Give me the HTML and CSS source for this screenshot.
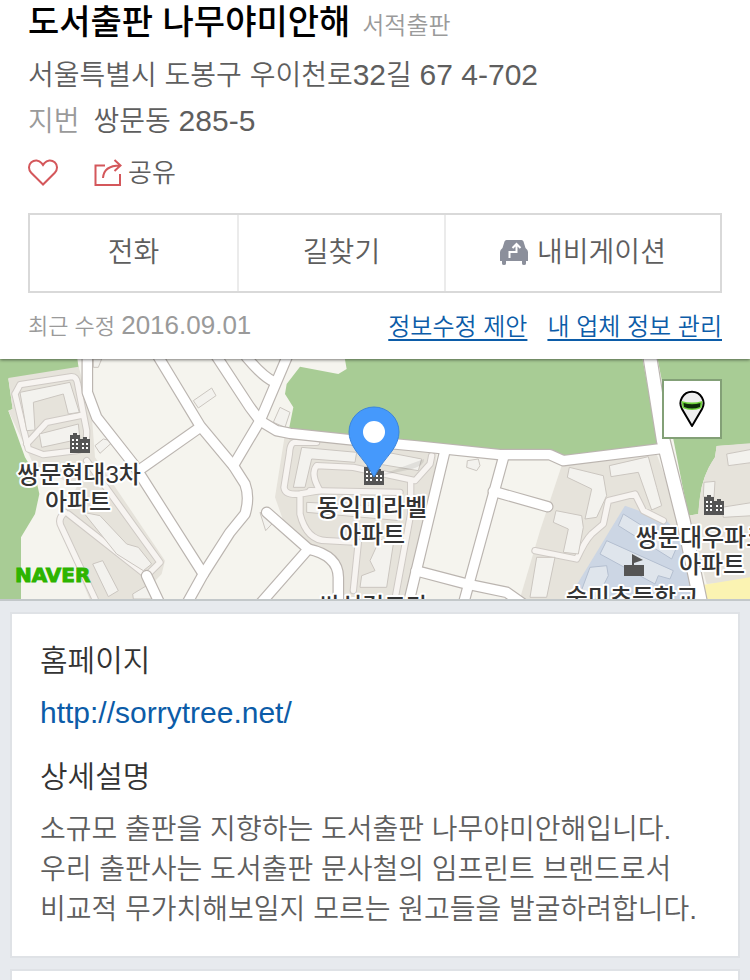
FILE: index.html
```html
<!DOCTYPE html>
<html lang="ko">
<head>
    <meta charset="UTF-8">
    <meta name="viewport" content="width=device-width, initial-scale=1.0">
    <title>도서출판 나무야미안해</title>
    <link rel="stylesheet" href="styles.css">
</head>
<body>
<header class="place">
    <div class="place-title">
        <h1>도서출판 나무야미안해</h1>
        <span class="category">서적출판</span>
    </div>
    <p class="address">서울특별시 도봉구 우이천로<span class="num">32</span>길 <span class="num">67 4-702</span></p>
    <p class="address"><span class="tag">지번</span>쌍문동 <span class="num">285-5</span></p>
    <div class="actions">
        <button class="icon-btn" aria-label="저장">
            <svg width="30" height="28" viewBox="0 0 30 28"><path d="M15 25.500 L3.200 13.800 C.2 10.600.3 6 3.300 3.300 C6.500.6 11 1 13.600 4.200 L15 6 L16.400 4.200 C19 1 23.500.6 26.700 3.300 C29.700 6 29.800 10.600 26.800 13.800 Z"/></svg>
        </button>
        <button class="icon-btn">
            <svg width="28" height="28" viewBox="0 0 28 28"><path d="M11 6.500 H1.500 V26 H26 V15"/><path d="M9 19 C9.500 11.500 15 6.500 26 6.500 M20.500 1 L26.500 6.500 L20.500 12"/></svg>
            공유
        </button>
    </div>
    <div class="menu">
        <button>전화</button>
        <button>길찾기</button>
        <button>
            <svg width="28" height="26" viewBox="0 0 28 26"><path fill="#8b8f9b" d="M6.500 0 H21.500 Q23 0 23.500 1.500 L25.500 8 Q28 10 28 12 V21 H26 V23.500 Q26 25 24 25 Q22 25 22 23.500 V21 H6 V23.500 Q6 25 4 25 Q2 25 2 23.500 V21 H0 V12 Q0 10 2.500 8 L4.500 1.500 Q5 0 6.500 0 Z"/><path fill="none" stroke="#fff" stroke-width="2" d="M9.500 18 V12 H16.500 V5 M12.500 8 L16.500 4 L20.500 8"/></svg>
            내비게이션
        </button>
    </div>
    <div class="meta">
        <span class="updated">최근 수정 <span class="num">2016.09.01</span></span>
        <nav>
            <a href="#">정보수정 제안</a>
            <a href="#">내 업체 정보 관리</a>
        </nav>
    </div>
</header>

<div class="map">
    <svg class="map-canvas" viewBox="0 0 750 240" preserveAspectRatio="xMidYMid slice">
        <defs>
            <g id="apt"><path fill="#555" d="M0 2 H3 V0 H7 V2 H10 V6 H13 V4 H17 V6 H20 V20 H0 Z"/><path fill="#fff" d="M2 6h2v2h-2zM6 6h2v2h-2zM2 10h2v2h-2zM6 10h2v2h-2zM2 14h2v2h-2zM6 14h2v2h-2zM12 10h2v2h-2zM16 10h2v2h-2zM12 14h2v2h-2zM16 14h2v2h-2z"/></g>
            <g id="roads">
                <path d="M262 0 V115 L290 190 L400 330 L610 660"/>
                <path d="M470 0 L600 215 L700 335 L735 390 Q750 430 735 480 L690 535 L610 660 L560 750"/>
                <path d="M415 350 L600 220"/>
                <path d="M645 0 L750 160 L780 200 L830 230 L870 238 L1040 256 L1250 276 L1500 302 H1650 L1690 320 L1990 283"/>
                <path d="M865 0 L780 200 L700 335"/>
                <path d="M740 10 Q790 70 825 85"/>
                <path d="M800 475 L925 585 L780 750"/>
                <path d="M925 585 Q1015 605 1015 670 V750"/>
                <path d="M1335 290 L1225 750"/>
                <path d="M1248 650 L1400 690 L1520 715 L1570 750"/>
                <path d="M1512 305 L1390 750"/>
                <path d="M1480 412 L1643 458"/>
                <path d="M440 665 L480 750"/>
            </g>
            <g id="lanes">
                <path d="M45 120 L60 92 L215 68 Q230 68 233 90 L260 230 Q262 285 230 290 L130 302 L85 285 L45 120 M80 270 L140 205 L240 185"/>
                <path d="M195 475 Q170 495 185 520 L285 735 M205 480 L440 665 M440 665 L480 625 L260 320"/>
                <path d="M950 265 L885 265 Q870 265 868 300 L852 400 Q855 425 900 420 L960 410 Q930 360 950 335 L1060 340 L1245 380 L1290 330 L1295 305"/>
                <path d="M900 430 L900 480 Q920 560 980 560 L1075 565 L1060 710 M930 410 L1200 415 M1232 380 L1232 480 L1185 735"/>
                <path d="M1605 590 L1730 615 Q1755 560 1775 540 L1810 510 L1825 440 L1905 420 L1930 470 L1990 500"/>
            </g>
        </defs>
        <rect width="750" height="240" fill="#f5f4ee"/>
        <g transform="translate(0 -5) scale(.33333)">
            <path fill="#a8cc95" d="M0 0 H230 L236 42 L25 74 L38 165 L25 170 L75 310 L105 360 L118 420 L105 480 L63 550 V750 H0 Z"/>
            <path fill="#a8cc95" d="M1032 0 L1040 45 L1015 60 L900 38 L860 90 L855 120 L880 160 L865 235 L1500 300 H1670 L1690 310 L1975 270 L1925 0 Z"/>
            <path fill="#a8cc95" d="M1970 0 H2250 V270 L2150 276 L2145 310 Q2105 370 2100 430 L2095 480 L2065 485 Z"/>
            <path fill="#e6e3db" d="M25 72 L236 38 L275 180 L285 310 L495 620 L485 660 L400 750 H275 L175 510 L230 400 L100 330 L25 170 L38 165 Z"/>
            <path fill="#e6e3db" d="M855 240 L1310 300 L1290 480 L1230 750 H1030 L1010 650 L850 500 L825 430 Z"/>
            <path fill="#e6e3db" d="M1685 335 L1970 300 L2080 600 V750 H1555 L1620 530 Z"/>
            <path fill="#e6e3db" d="M2150 276 L2250 268 V680 L2120 690 L2065 485 L2095 480 Q2100 370 2145 310 Z"/>
            <path fill="#ccd6e4" d="M1875 455 L2000 500 L2065 570 L2090 700 V750 H1695 Z"/>
            <path fill="#fbf3b2" d="M2085 697 L2250 670 V750 H2095 Z"/>
            <g fill="none" stroke-linecap="round" stroke-linejoin="round">
                <use href="#lanes" stroke="#cfcac5" stroke-width="22"/>
                <use href="#lanes" stroke="#f7f4f1" stroke-width="16"/>
            </g>
            <g fill="#f3f2ee" stroke="#cbc6c0" stroke-width="3" stroke-linejoin="round">
                <path d="M60 115 L210 85 L238 175 L205 180 L190 120 L100 145 L105 228 L80 230 Z"/>
                <path d="M118 240 L235 210 L240 255 L125 280 Z"/>
                <path d="M250 475 L300 485 L380 570 L415 580 L455 630 L430 650 L350 600 Z"/>
                <path d="M278 630 L308 620 L355 710 L325 728 Z"/>
                <path d="M398 720 L440 695 L465 735 H400 Z"/>
                <path d="M280 15 H305 L295 40 H280 Z"/>
                <path d="M580 140 L635 102 L648 125 L595 162 Z"/>
                <path d="M285 275 L310 255 L340 262 L300 298 Z"/>
                <path d="M820 205 L840 160 L870 175 L855 220 Z"/>
                <path d="M905 280 L1070 295 L1065 325 L935 315 L915 400 L880 400 Z"/>
                <path d="M1110 285 L1265 315 L1255 350 L1105 325 Z"/>
                <path d="M920 445 L1200 460 V500 L920 475 Z"/>
                <path d="M1140 555 L1180 570 L1160 700 H1080 L1085 665 L1125 650 L1110 620 Z"/>
                <path d="M1402 320 L1435 315 L1440 335 L1430 350 L1400 340 Z"/>
                <path d="M780 475 L820 505 L797 530 Z"/>
                <path d="M1708 340 L1810 365 L1820 425 L1790 490 L1755 495 L1775 405 L1702 370 Z"/>
                <path d="M1828 335 L1945 308 L1970 400 L1985 455 L1955 468 L1915 355 L1833 368 Z"/>
                <path d="M1668 470 L1745 485 L1750 520 L1735 600 L1690 595 L1705 525 L1660 505 Z"/>
                <path d="M1610 610 L1665 610 L1640 730 H1590 Z"/>
                <path d="M2112 385 L2145 382 L2142 430 L2110 428 Z"/>
                <path d="M2180 300 L2260 285 V325 L2185 335 Z"/>
                <path d="M2165 460 L2260 445 V485 L2170 490 Z"/>
            </g>
            <g fill="#dfe5ec" stroke="#b4bfd0" stroke-width="3">
                <path d="M1870 480 L2030 580 L2015 615 L1855 515 Z"/>
                <path d="M1820 560 L2020 650 L2010 675 L1975 665 L1965 690 L1800 600 Z"/>
                <path d="M1770 640 L1820 635 L1825 665 L1790 735 H1735 Z"/>
            </g>
            <g fill="none" stroke-linecap="round" stroke-linejoin="round">
                <use href="#roads" stroke="#bbb5b0" stroke-width="35"/>
                <path d="M1945 -20 L1990 260 L2050 500 L2105 760" stroke="#bbb5b0" stroke-width="45"/>
                <use href="#roads" stroke="#fff" stroke-width="28"/>
                <path d="M1945 -20 L1990 260 L2050 500 L2105 760" stroke="#fff" stroke-width="38"/>
            </g>
        </g>

        <use href="#apt" x="70" y="74"/>
        <use href="#apt" x="364" y="106"/>
        <use href="#apt" x="704" y="136"/>
        <path fill="#555" d="M624 206 H632 V195 L643 201 L634 204 V206 H644 V217 H624 Z"/>
        <g class="map-label">
            <text x="79" y="124">쌍문현대3차</text>
            <text x="78" y="151">아파트</text>
            <text x="372" y="157">동익미라벨</text>
            <text x="372" y="184">아파트</text>
            <text x="702" y="187">쌍문대우파크</text>
            <text x="712" y="214">아파트</text>
            <text x="632" y="247">숭미초등학교</text>
            <text x="373" y="256">쌍성경코타</text>
        </g>
        <path fill="#000" opacity=".08" d="M375 118 L424 100 Q425 106 412 110 Z"/>
        <path fill="#4599fc" stroke="#3a84dc" d="M374 118 Q368 106 356 92 Q349 82 349 73 A25 25 0 0 1 399 73 Q399 82 392 92 Q380 106 374 118 Z"/>
        <circle cx="374" cy="73" r="11" fill="#fff"/>
        <text class="map-logo" x="15" y="223">NAVER</text>
    </svg>
    <button class="street-view" aria-label="거리뷰">
        <svg width="26" height="38" viewBox="0 0 26 38"><path fill="#eee" stroke="#000" stroke-width="2" stroke-linejoin="round" d="M13 36 L3 19 A11.500 11.500 0 1 1 23 19 Z"/><path fill="#6fd23c" d="M2.500 11 Q13 14 23.500 11 L22.500 18 Q13 22 3.500 18 Z"/><path fill="#0c2a08" d="M4.500 13 Q13 15.500 21.500 13 L21 17 Q13 20 5 17 Z"/></svg>
    </button>
</div>

<main class="content">
    <section class="card">
        <h2>홈페이지</h2>
        <a class="homepage" href="http://sorrytree.net/">http://sorrytree.net/</a>
        <h2>상세설명</h2>
        <p>소규모 출판을 지향하는 도서출판 나무야미안해입니다.<br>
            우리 출판사는 도서출판 문사철의 임프린트 브랜드로서<br>
            비교적 무가치해보일지 모르는 원고들을 발굴하려합니다.</p>
    </section>
    <section class="card card-next"></section>
</main>
</body>
</html>
```
FILE: styles.css
```css
:root {
    --text-color: #5e5e5e;
    --muted-color: #9a9a9a;
    --link-color: #0c5ca8;
    --border-color: #d9d9d9;
    --page-bg: #e7eaee;
}
* {
    box-sizing: border-box;
}
body {
    display: flex;
    flex-direction: column;
    min-height: 100vh;
    margin: 0;
    font-family: 'Liberation Sans', 'Noto Sans CJK KR', sans-serif;
    font-size: 28px;
    font-weight: 350;
    line-height: 40px;
    color: var(--text-color);
    background-color: var(--page-bg);
}
h1, h2, p {
    margin: 0;
}
button {
    font: inherit;
    color: inherit;
    background: none;
    border: none;
    padding: 0;
    cursor: pointer;
}
a {
    color: var(--link-color);
}
.num {
    font-size: 30px;
    line-height: 1;
}
.place {
    position: relative;
    z-index: 1;
    padding: 0 28px 16px;
    background-color: #fff;
    box-shadow: 0 1px 3px rgba(0, 0, 0, 0.5);
}
.place-title {
    display: flex;
    align-items: baseline;
    gap: 12px;
    margin-bottom: 9px;
    line-height: 44px;
}
h1 {
    font-size: 34px;
    font-weight: 500;
    color: #000;
}
.category {
    font-size: 24px;
    line-height: 1;
    color: var(--muted-color);
}
.address {
    line-height: 46px;
}
.tag {
    margin-right: 14px;
    color: var(--muted-color);
}
.actions {
    display: flex;
    gap: 36px;
    margin-top: 8px;
}
.icon-btn {
    display: flex;
    align-items: center;
    gap: 6px;
    height: 40px;
    font-size: 26px;
}
.icon-btn svg {
    fill: none;
    stroke: #d4575b;
    stroke-width: 2;
}
.menu {
    display: grid;
    grid-template-columns: 3fr 3fr 4fr;
    height: 80px;
    margin-top: 20px;
    border: 2px solid var(--border-color);
}
.menu button {
    display: flex;
    align-items: center;
    justify-content: center;
    gap: 9px;
}
.menu button + button {
    border-left: 2px solid #ebebeb;
}
.meta {
    display: flex;
    justify-content: space-between;
    margin-top: 18px;
    font-size: 24px;
    line-height: 32px;
}
.meta nav {
    display: flex;
    gap: 20px;
}
.meta a {
    text-underline-offset: 4px;
}
.updated {
    font-size: 22px;
    color: var(--muted-color);
}
.updated .num {
    font-size: 26px;
}
.map {
    position: relative;
    height: 242px;
    border-bottom: 2px solid #c3c8ca;
}
.map-canvas {
    display: block;
    width: 100%;
    height: 100%;
}
.map-label {
    font-size: 24px;
    font-weight: 500;
    text-anchor: middle;
    fill: #333;
    stroke: #fff;
    stroke-width: 4px;
    stroke-linejoin: round;
    paint-order: stroke;
}
.map-logo {
    font-family: 'DejaVu Sans', sans-serif;
    font-size: 20px;
    font-weight: bold;
    fill: #2db400;
    stroke: #2db400;
}
.street-view {
    position: absolute;
    top: 20px;
    right: 28px;
    display: flex;
    align-items: center;
    justify-content: center;
    width: 60px;
    height: 60px;
    background-color: #fff;
    border: 2px solid #83a077;
}
.content {
    display: flex;
    flex: 1;
    flex-direction: column;
    gap: 11px;
    padding: 11px 10px 0;
}
.card {
    padding: 24px 28px 26px;
    background-color: #fff;
    border: 2px solid #dfe2e6;
}
.card-next {
    flex: 1;
    padding: 0;
    border-bottom: none;
}
h2 {
    font-size: 30px;
    font-weight: 350;
    line-height: 46px;
    color: #333;
}
.homepage {
    display: block;
    margin: 6px 0 18px;
    font-size: 30px;
    line-height: 46px;
    text-decoration: none;
}
.card p {
    margin-top: 10px;
}
```
